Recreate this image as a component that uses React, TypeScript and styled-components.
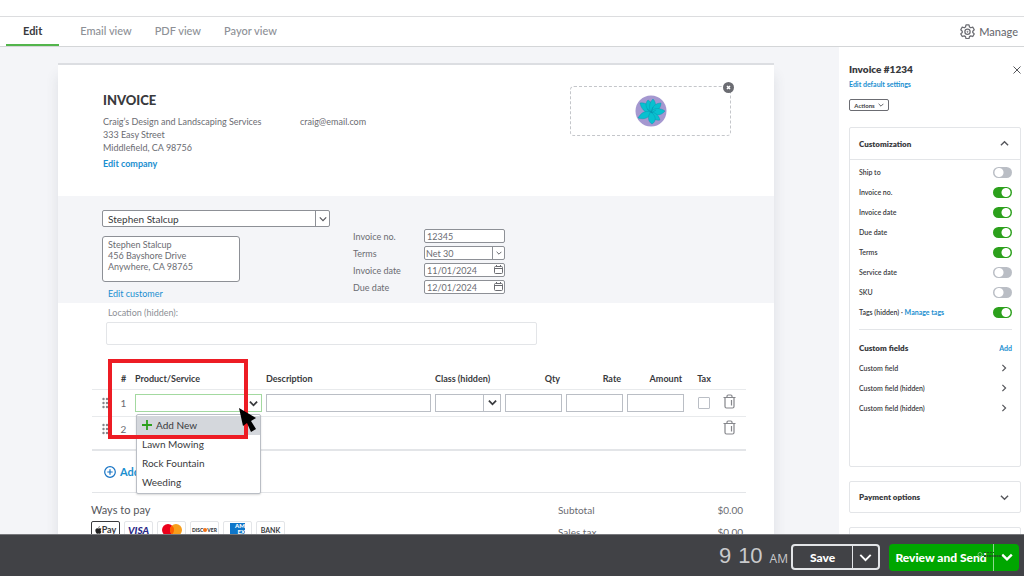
import React from "react";
import styled, { createGlobalStyle, css } from "styled-components";

const Global = createGlobalStyle`
  * { box-sizing: border-box; }
  body { margin: 0; font-family: Lato, "Open Sans", sans-serif; color: #393a3d; background: #fff; }
  button, input, select, textarea { font: inherit; color: inherit; margin: 0; }
  button { background: none; border: 0; padding: 0; cursor: pointer; }
  a { color: #1b8fd0; text-decoration: none; }
  svg { display: block; flex: none; }
`;

const Page = styled.div`
  height: 100vh;
  display: flex;
  flex-direction: column;
  overflow: hidden;
`;
const TopStrip = styled.div`
  height: 17px;
  flex: none;
  border-bottom: 1px solid #dcdddf;
`;
const TabBar = styled.nav`
  height: 30px;
  flex: none;
  display: flex;
  align-items: stretch;
  padding: 0 6px;
  border-bottom: 1px solid #d4d6d8;
  font-size: 11px;
`;
const Tab = styled.button<{ $active?: boolean }>`
  padding: 0 ${(p) => (p.$active ? 17 : 0)}px;
  margin-right: ${(p) => (p.$active ? 21 : 23)}px;
  color: ${(p) => (p.$active ? "#393a3d" : "#8d9096")};
  font-weight: ${(p) => (p.$active ? 700 : 500)};
  border-bottom: 2px solid ${(p) => (p.$active ? "#53b54c" : "transparent")};
`;
const Manage = styled.button`
  margin-left: auto;
  display: flex;
  align-items: center;
  gap: 4px;
  font-weight: 500;
  color: #6b6c72;
`;
const Body = styled.div`
  flex: 1;
  min-height: 0;
  display: flex;
  overflow: hidden;
  background: #f4f5f8;
`;
const Canvas = styled.main`
  flex: 1;
  min-width: 0;
  padding: 16px 65px 0 58px;
`;
const Paper = styled.article`
  background: #fff;
  border-top: 2px solid #dcdee2;
  box-shadow: 0 12px 12px rgba(60, 66, 80, 0.12);
`;
const PaperHead = styled.header`
  height: 131px;
  padding: 21px 43px 0 45px;
  display: flex;
  font-size: 9px;
  line-height: 13px;
  color: #6b6c72;
`;
const Company = styled.div`
  width: 197px;
`;
const Title = styled.h1`
  margin: 0;
  font-size: 13px;
  line-height: 29px;
  font-weight: 900;
  color: #393a3d;
`;
const Address = styled.p`
  margin: 0;
  white-space: pre-line;
`;
const TextLink = styled.a`
  display: inline-block;
  margin-top: 3px;
  font-weight: 700;
`;
const Email = styled.div`
  flex: 1;
  padding-top: 29px;
`;
const LogoBox = styled.div`
  position: relative;
  width: 161px;
  height: 50px;
  display: flex;
  align-items: center;
  justify-content: center;
  border: 1px dashed #c4c6ca;
  border-radius: 4px;
`;
const RemoveLogo = styled.button`
  position: absolute;
  right: -4px;
  top: -5px;
  width: 11px;
  height: 11px;
`;
const Customer = styled.section`
  min-height: 107px;
  padding: 14px 44px 0 44px;
  display: flex;
  background: #f4f5f8;
`;
const CustomerLeft = styled.div`
  width: 251px;
`;
const SelectWrap = styled.div<{ $arrow: number; $tone?: string }>`
  position: relative;
  display: flex;
  select {
    appearance: none;
    width: 100%;
    border: 1px solid ${(p) => p.$tone || "#8d9096"};
    border-radius: 2px;
    background: #fff;
    outline: 0;
  }
  > span {
    position: absolute;
    right: 0;
    top: 0;
    bottom: 0;
    width: ${(p) => p.$arrow}px;
    display: flex;
    align-items: center;
    justify-content: center;
    border-left: 1px solid ${(p) => p.$tone || "#8d9096"};
    pointer-events: none;
  }
`;
const CustomerSelect = styled(SelectWrap)`
  width: 228px;
  select { height: 17px; padding: 0 5px; font-size: 10px; }
`;
const AddressBox = styled.textarea`
  display: block;
  width: 138px;
  height: 46px;
  margin: 9px 0 6px;
  padding: 2px 5px;
  border: 1px solid #8d9096;
  border-radius: 3px;
  resize: none;
  overflow: hidden;
  background: #fff;
  color: #6b6c72 !important;
  font-size: 9px !important;
  line-height: 11px !important;
`;
const EditCustomer = styled.a`
  display: block;
  padding-left: 6px;
  font-size: 9px;
  line-height: 12px;
`;
const Details = styled.div`
  display: grid;
  grid-template-columns: 71px 81px;
  grid-auto-rows: 14px;
  row-gap: 3px;
  align-content: start;
  align-items: center;
  padding-top: 19px;
  font-size: 9px;
  color: #6b6c72;
  select { height: 14px; padding: 0 1px; }
`;
const DetailField = styled.div`
  position: relative;
  display: flex;
  input {
    width: 100%;
    height: 14px;
    padding: 0 2px;
    border: 1px solid #8d9096;
    border-radius: 2px;
    background: #fff;
  }
  svg { position: absolute; right: 2px; top: 2px; }
`;
const Location = styled.section`
  padding: 4px 44px 0 48px;
  font-size: 9px;
  color: #8d9096;
  label { display: block; padding-left: 2px; line-height: 12px; }
  input {
    display: block;
    width: 431px;
    height: 23px;
    margin-top: 3px;
    border: 1px solid #e3e5e8;
    border-radius: 2px;
  }
`;
const Lines = styled.section`
  position: relative;
  margin: 25px 28px 0 34px;
`;
const LineTable = styled.table`
  width: 100%;
  table-layout: fixed;
  border-collapse: collapse;
  font-size: 10px;
  th, td { padding: 0 2px; text-align: left; border-bottom: 1px solid #e8eaec; }
  th { height: 19px; line-height: 18px; font-size: 9px; font-weight: 700; white-space: nowrap; vertical-align: middle; }
  td { height: 27px; vertical-align: middle; }
  td:last-child { padding: 0 0 0 1px; }
  tr:last-child td { height: 34px; padding-bottom: 8px; border-bottom: 2px solid #e3e5e8; }
  th.num { text-align: right; padding-right: 4px; }
  th.mid, td.mid { text-align: center; }
  td.mid { color: #6b6c72; }
`;
const GripCell = styled.span`
  display: flex;
  justify-content: flex-end;
`;
const CellInput = styled.input<{ $green?: boolean }>`
  display: block;
  width: 100%;
  height: 18px;
  padding: 0 3px;
  border: 1px solid ${(p) => (p.$green ? "#a3d9a0" : "#babec5")};
  outline: 0;
`;
const CellSelect = styled(SelectWrap)`
  select { height: 18px; border-radius: 0; }
`;
const Combo = styled.div`
  position: relative;
  > svg { position: absolute; right: 4px; top: 5px; }
`;
const Menu = styled.ul`
  position: absolute;
  z-index: 2;
  left: 1px;
  top: 20px;
  width: 125px;
  margin: 0;
  padding: 1px 0;
  list-style: none;
  background: #fff;
  border: 1px solid #babec5;
  border-radius: 2px;
  box-shadow: 0 1px 2px rgba(0, 0, 0, 0.15);
`;
const MenuItem = styled.li<{ $on?: boolean }>`
  button {
    width: 100%;
    height: 19px;
    padding: 0 5px;
    display: flex;
    align-items: center;
    gap: 4px;
    font-size: 10px;
    ${(p) => p.$on && css`background: #d4d7dc;`}
  }
`;
const Check = styled.input`
  appearance: none;
  display: block;
  width: 12px;
  height: 12px;
  margin: 0 auto !important;
  border: 1px solid #babec5;
  border-radius: 1px;
  background: #fff;
`;
const Highlight = styled.div`
  position: absolute;
  z-index: 3;
  left: 16px;
  top: -11px;
  width: 140px;
  height: 80px;
  border: 4px solid #ed1c24;
  pointer-events: none;
`;
const Pointer = styled.div`
  position: absolute;
  z-index: 4;
  left: 147px;
  top: 36px;
  pointer-events: none;
`;
const AddRow = styled.div`
  height: 42px;
  padding-left: 12px;
  display: flex;
  align-items: center;
  border-bottom: 1px solid #e3e5e8;
  button { display: flex; align-items: center; gap: 4px; font-size: 11px; font-weight: 700; color: #1b8fd0; }
`;
const PayRow = styled.section`
  display: flex;
  justify-content: space-between;
  padding: 8px 31px 20px 33px;
`;
const PayTitle = styled.h2`
  margin: 0 0 3px;
  font-size: 11px;
  line-height: 17px;
  font-weight: 400;
  color: #55565b;
`;
const Chips = styled.div`
  display: flex;
  gap: 4px;
`;
const Chip = styled.span<{ $dark?: boolean; $color?: string }>`
  width: 29px;
  height: 17px;
  display: flex;
  align-items: center;
  justify-content: center;
  border: 1px solid ${(p) => (p.$dark ? "#393a3d" : "#e3e5e8")};
  border-radius: 2px;
  font-size: 7px;
  font-weight: 700;
  color: ${(p) => p.$color || "#393a3d"};
`;
const PayWord = styled.span`
  font-size: 9px;
`;
const Visa = styled.i`
  font-size: 10px;
  font-weight: 900;
`;
const Discover = styled.b`
  display: flex;
  align-items: center;
  font-size: 5px;
`;
const Amex = styled.span`
  width: 15px;
  height: 13px;
  font-size: 6px;
  line-height: 6px;
  font-weight: 900;
  text-align: right;
  color: #fff;
  background: #0f76c9;
`;
const Totals = styled.dl`
  width: 185px;
  margin: 1px 0 0;
  display: grid;
  grid-template-columns: 1fr auto;
  row-gap: 5px;
  font-size: 10px;
  line-height: 17px;
  color: #6b6c72;
  dd { margin: 0; }
`;
const Sidebar = styled.aside`
  width: 185px;
  flex: none;
  padding: 15px 3px 0 10px;
  background: #fff;
  font-size: 7px;
  font-weight: 600;
`;
const SideHead = styled.div`
  display: flex;
  justify-content: space-between;
  align-items: center;
  h2 { margin: 0; font-size: 10px; line-height: 15px; font-weight: 800; }
`;
const SideLink = styled.a`
  display: block;
  line-height: 15px;
  font-weight: 700;
`;
const Actions = styled.button`
  height: 12px;
  width: 40px;
  margin: 7px 0 16px;
  display: flex;
  align-items: center;
  justify-content: center;
  gap: 3px;
  border: 1px solid #6b6c72;
  border-radius: 2px;
  font-size: 6px;
  font-weight: 700;
`;
const Card = styled.section<{ $tall?: boolean }>`
  min-height: ${(p) => (p.$tall ? 340 : 32)}px;
  margin-bottom: 14px;
  border: 1px solid #e3e5e8;
  border-radius: 2px;
`;
const CardHead = styled.button<{ $open?: boolean }>`
  width: 100%;
  height: ${(p) => (p.$open ? 32 : 30)}px;
  padding: 0 11px 0 9px;
  display: flex;
  justify-content: space-between;
  align-items: center;
  font-size: 8px;
  font-weight: 800;
  border-bottom: ${(p) => (p.$open ? "1px solid #e3e5e8" : "0")};
`;
const Options = styled.div`
  margin: 0 8px 0 9px;
  padding: 2px 0 7px;
  border-bottom: 1px solid #e3e5e8;
`;
const OptionRow = styled.div`
  height: 20px;
  display: flex;
  justify-content: space-between;
  align-items: center;
  a { font-weight: 700; }
`;
const Toggle = styled.input`
  appearance: none;
  width: 19px;
  height: 11px;
  border-radius: 6px;
  background: radial-gradient(circle at 6px 50%, #fff 4px, transparent 5px) #babec5;
  &:checked { background: radial-gradient(circle at 13px 50%, #fff 4px, transparent 5px) #2ca01c; }
`;
const FieldsHead = styled(OptionRow)`
  margin: 8px 8px 0 9px;
  h3 { margin: 0; font-size: 8px; font-weight: 800; }
`;
const FieldRow = styled.button`
  width: 100%;
  height: 20px;
  padding: 0 12px 0 9px;
  display: flex;
  justify-content: space-between;
  align-items: center;
`;
const Footer = styled.footer`
  height: 42px;
  flex: none;
  display: flex;
  align-items: center;
  justify-content: flex-end;
  padding: 3px 5px 0 0;
  background: #414246;
  border-top: 1px solid #77787c;
  color: #fff;
  font-weight: 700;
`;
const Clock = styled.time`
  display: flex;
  align-items: baseline;
  margin-right: 3px;
  font-weight: 400;
  color: #c9cacc;
  font-family: "Liberation Sans", sans-serif;
  font-size: 22px;
  line-height: 22px;
  b { font-weight: 400; margin-right: 7px; }
  small { font-family: "Open Sans", sans-serif; font-size: 12px; }
`;
const SplitButton = styled.div<{ $green?: boolean }>`
  position: relative;
  height: ${(p) => (p.$green ? 27 : 26)}px;
  margin-left: ${(p) => (p.$green ? 9 : 0)}px;
  display: flex;
  border-radius: 4px;
  border: ${(p) => (p.$green ? "0" : "2px solid #e3e5e8")};
  background: ${(p) => (p.$green ? "#00a600" : "transparent")};
  button {
    display: flex;
    align-items: center;
    justify-content: center;
    font-size: 12px;
    font-weight: 900;
    white-space: nowrap;
  }
  button:first-child { width: ${(p) => (p.$green ? 104 : 59)}px; }
  button:last-of-type {
    width: 26px;
    border-left: 1px solid ${(p) => (p.$green ? "#8ed88e" : "#e3e5e8")};
  }
`;
const Mark = styled.span`
  position: absolute;
  right: 16px;
  top: 7px;
  pointer-events: none;
`;

const Chevron = ({ dir = "down", size = 8, w = 1.5, color = "#55565b" }: { dir?: string; size?: number; w?: number; color?: string }) => {
  const d = dir === "down" ? "M1 3 L5 7 L9 3" : dir === "up" ? "M1 7 L5 3 L9 7" : "M3 1 L7 5 L3 9";
  return (
    <svg width={size} height={size} viewBox="0 0 10 10" fill="none" stroke={color} strokeWidth={w}>
      <path d={d} />
    </svg>
  );
};

const Gear = () => (
  <svg width="15" height="15" viewBox="0 0 24 24" fill="none" stroke="#6b6c72" strokeWidth="2" strokeLinejoin="round">
    <path d="M9.6 1.5h4.8l.8 3.3 2 1.2 3.2-1 2.400 4.200-2.400 2.300v2l2.400 2.300-2.400 4.200-3.200-1-2 1.200-.8 3.300H9.600l-.8-3.300-2-1.200-3.200 1-2.400-4.200 2.400-2.300v-2L1.200 9.200 3.600 5l3.200 1 2-1.200z" />
    <circle cx="12" cy="12.500" r="4.200" />
    <circle cx="12" cy="12.500" r="0.800" strokeWidth="1.500" />
  </svg>
);

const Flower = () => (
  <svg width="32" height="32" viewBox="0 0 32 32">
    <circle cx="16" cy="16" r="15.500" fill="#a598d0" />
    <g fill="#08c0cf" stroke="#0790ac" strokeWidth="0.400">
      <path d="M16 18 C9 18 6 13 5 8 C11 7 16 11 16 18Z" />
      <path d="M16 18 C10 13 10 8 13 5 C17 7 18 12 16 18Z" />
      <path d="M16 18 C13 11 15 7 18 4 C22 8 21 13 16 18Z" />
      <path d="M16 18 C17 11 21 8 26 8 C26 13 22 18 16 18Z" />
      <path d="M16 17 C19 12 26 13 30 16 C26 21 20 21 16 17Z" />
      <path d="M16 17 C10 15 6 18 3 23 C9 25 15 23 16 17Z" />
      <path d="M15 17 C21 17 24 21 25 25 C20 26 16 23 15 17Z" />
      <path d="M16 17 C12 21 13 27 17 29 C22 26 21 21 16 17Z" />
    </g>
    <path d="M12 14l6 4M18 12l-2 6M21 15l-5 3" stroke="#0790ac" strokeWidth="0.500" />
  </svg>
);

const Calendar = () => (
  <svg width="9" height="9" viewBox="0 0 9 9" fill="none" stroke="#6b6c72" strokeWidth="1">
    <rect x="0.500" y="1.500" width="8" height="7" rx="1" />
    <path d="M0.500 3.500h8M2.500 0v2M6.500 0v2" />
  </svg>
);

const Grip = () => (
  <svg width="10" height="12" viewBox="0 0 10 12" fill="#85868b">
    {[1, 5, 9].map((y) => [1.5, 5, 8.5].map((x) => <circle key={`${x}-${y}`} cx={x} cy={y + 1} r="1.200" />))}
  </svg>
);

const Trash = () => (
  <svg width="13" height="15" viewBox="0 0 13 15" fill="none" stroke="#85868b" strokeWidth="1.200">
    <path d="M0.500 3.500h12M4 3.500V2.200q0-1.200 1.200-1.200h2.600q1.200 0 1.200 1.200v1.300M2 3.500v9q0 1.500 1.500 1.500h6q1.500 0 1.500-1.500v-9M8.500 6v5.500" />
  </svg>
);

const options = [
  ["Ship to", false],
  ["Invoice no.", true],
  ["Invoice date", true],
  ["Due date", true],
  ["Terms", true],
  ["Service date", false],
  ["SKU", false],
  ["Tags (hidden)", true],
] as const;

export default function App() {
  return (
    <Page>
      <Global />
      <TopStrip />
      <TabBar>
        <Tab $active>Edit</Tab>
        <Tab>Email view</Tab>
        <Tab>PDF view</Tab>
        <Tab>Payor view</Tab>
        <Manage><Gear />Manage</Manage>
      </TabBar>
      <Body>
        <Canvas>
          <Paper>
            <PaperHead>
              <Company>
                <Title>INVOICE</Title>
                <Address>{"Craig’s Design and Landscaping Services\n333 Easy Street\nMiddlefield, CA 98756"}</Address>
                <TextLink href="#company">Edit company</TextLink>
              </Company>
              <Email>craig@email.com</Email>
              <LogoBox>
                <Flower />
                <RemoveLogo aria-label="Remove logo">
                  <svg width="11" height="11" viewBox="0 0 11 11">
                    <circle cx="5.500" cy="5.500" r="5.500" fill="#6b6c72" />
                    <path d="M4 4l3 3M7 4l-3 3" stroke="#fff" strokeWidth="1.500" />
                  </svg>
                </RemoveLogo>
              </LogoBox>
            </PaperHead>
            <Customer>
              <CustomerLeft>
                <CustomerSelect $arrow={15}>
                  <select aria-label="Customer"><option>Stephen Stalcup</option></select>
                  <span><Chevron /></span>
                </CustomerSelect>
                <AddressBox aria-label="Billing address" defaultValue={"Stephen Stalcup\n456 Bayshore Drive\nAnywhere, CA 98765"} />
                <EditCustomer href="#customer">Edit customer</EditCustomer>
              </CustomerLeft>
              <Details>
                <label htmlFor="no">Invoice no.</label>
                <DetailField><input id="no" defaultValue="12345" /></DetailField>
                <label htmlFor="terms">Terms</label>
                <SelectWrap $arrow={13}>
                  <select id="terms"><option>Net 30</option></select>
                  <span><Chevron size={6} /></span>
                </SelectWrap>
                <label htmlFor="date">Invoice date</label>
                <DetailField><input id="date" defaultValue="11/01/2024" /><Calendar /></DetailField>
                <label htmlFor="due">Due date</label>
                <DetailField><input id="due" defaultValue="12/01/2024" /><Calendar /></DetailField>
              </Details>
            </Customer>
            <Location>
              <label htmlFor="location">Location (hidden):</label>
              <input id="location" />
            </Location>
            <Lines>
              <LineTable>
                <colgroup>
                  <col style={{ width: 22 }} />
                  <col style={{ width: 19 }} />
                  <col style={{ width: 131 }} />
                  <col />
                  <col style={{ width: 70 }} />
                  <col style={{ width: 61 }} />
                  <col style={{ width: 61 }} />
                  <col style={{ width: 61 }} />
                  <col style={{ width: 36 }} />
                  <col style={{ width: 24 }} />
                </colgroup>
                <thead>
                  <tr>
                    <th />
                    <th className="mid">#</th>
                    <th>Product/Service</th>
                    <th>Description</th>
                    <th>Class (hidden)</th>
                    <th className="num">Qty</th>
                    <th className="num">Rate</th>
                    <th className="num">Amount</th>
                    <th className="mid">Tax</th>
                    <th />
                  </tr>
                </thead>
                <tbody>
                  <tr>
                    <td><GripCell><Grip /></GripCell></td>
                    <td className="mid">1</td>
                    <td>
                      <Combo>
                        <CellInput $green aria-label="Product or service" />
                        <Chevron size={9} w={2} color="#393a3d" />
                        <Menu>
                          <MenuItem $on>
                            <button>
                              <svg width="10" height="10" viewBox="0 0 10 10" stroke="#2ca01c" strokeWidth="1.800"><path d="M5 0v10M0 5h10" /></svg>
                              Add New
                            </button>
                          </MenuItem>
                          <MenuItem><button>Lawn Mowing</button></MenuItem>
                          <MenuItem><button>Rock Fountain</button></MenuItem>
                          <MenuItem><button>Weeding</button></MenuItem>
                        </Menu>
                      </Combo>
                    </td>
                    <td><CellInput aria-label="Description" /></td>
                    <td>
                      <CellSelect $arrow={18} $tone="#babec5">
                        <select aria-label="Class"><option></option></select>
                        <span><Chevron size={9} w={2} color="#393a3d" /></span>
                      </CellSelect>
                    </td>
                    <td><CellInput aria-label="Quantity" /></td>
                    <td><CellInput aria-label="Rate" /></td>
                    <td><CellInput aria-label="Amount" /></td>
                    <td><Check type="checkbox" aria-label="Taxable" /></td>
                    <td><button aria-label="Delete line 1"><Trash /></button></td>
                  </tr>
                  <tr>
                    <td><GripCell><Grip /></GripCell></td>
                    <td className="mid">2</td>
                    <td /><td /><td /><td /><td /><td /><td />
                    <td><button aria-label="Delete line 2"><Trash /></button></td>
                  </tr>
                </tbody>
              </LineTable>
              <AddRow>
                <button>
                  <svg width="12" height="12" viewBox="0 0 12 12" fill="none" stroke="#1673c4" strokeWidth="1.200">
                    <circle cx="6" cy="6" r="5.300" />
                    <path d="M6 3.300v5.400M3.300 6h5.400" />
                  </svg>
                  Add lines
                </button>
              </AddRow>
              <Highlight />
              <Pointer>
                <svg width="20" height="27" viewBox="0 0 20 27">
                  <path d="M0 2 L17 12 L12 15 L17 23 L12 26 L8 17 L4 20 Z" fill="#000" />
                </svg>
              </Pointer>
            </Lines>
            <PayRow>
              <div>
                <PayTitle>Ways to pay</PayTitle>
                <Chips>
                  <Chip $dark>
                    <svg width="7" height="8" viewBox="0 0 7 8"><path d="M4.800 0Q3.300.5 3.400 1.900 4.800 1.700 4.800 0ZM6.500 2.800Q5.500 1.700 3.500 2.400 1.500 1.600.6 3.200-.2 5.300 1.600 7.600 2.300 8 3.500 7.500 4.900 8.200 5.600 7.200L6.400 5.800Q4.900 4.400 6.500 2.800Z" fill="#222" /></svg>
                    <PayWord>Pay</PayWord>
                  </Chip>
                  <Chip $color="#2a2a86"><Visa>VISA</Visa></Chip>
                  <Chip>
                    <svg width="20" height="12" viewBox="0 0 20 12">
                      <circle cx="6" cy="6" r="6" fill="#eb001b" />
                      <circle cx="14" cy="6" r="6" fill="#f79e1b" />
                      <path d="M10 1.500a6 6 0 0 1 0 9a6 6 0 0 1 0-9z" fill="#ff5f00" />
                    </svg>
                  </Chip>
                  <Chip>
                    <Discover>DISC<svg width="4" height="4" viewBox="0 0 4 4"><circle cx="2" cy="2" r="2" fill="#f47216" /></svg>VER</Discover>
                  </Chip>
                  <Chip><Amex>AM<br />EX</Amex></Chip>
                  <Chip>BANK</Chip>
                </Chips>
              </div>
              <Totals>
                <dt>Subtotal</dt><dd>$0.00</dd>
                <dt>Sales tax</dt><dd>$0.00</dd>
              </Totals>
            </PayRow>
          </Paper>
        </Canvas>
        <Sidebar>
          <SideHead>
            <h2>Invoice #1234</h2>
            <button aria-label="Close">
              <svg width="8" height="8" viewBox="0 0 8 8" stroke="#55565b" strokeWidth="1"><path d="M0.500 0.500l7 7M7.500 0.500l-7 7" /></svg>
            </button>
          </SideHead>
          <SideLink href="#defaults">Edit default settings</SideLink>
          <Actions>Actions<Chevron size={6} /></Actions>
          <Card $tall>
            <CardHead $open>Customization<Chevron dir="up" size={9} /></CardHead>
            <Options>
              {options.map(([name, on]) => (
                <OptionRow key={name}>
                  <span>
                    <label htmlFor={name}>{name}</label>
                    {name.startsWith("Tags") && <> · <a href="#tags">Manage tags</a></>}
                  </span>
                  <Toggle type="checkbox" id={name} defaultChecked={on} />
                </OptionRow>
              ))}
            </Options>
            <FieldsHead><h3>Custom fields</h3><a href="#add">Add</a></FieldsHead>
            <FieldRow>Custom field<Chevron dir="right" /></FieldRow>
            <FieldRow>Custom field (hidden)<Chevron dir="right" /></FieldRow>
            <FieldRow>Custom field (hidden)<Chevron dir="right" /></FieldRow>
          </Card>
          <Card><CardHead>Payment options<Chevron size={9} /></CardHead></Card>
          <Card />
        </Sidebar>
      </Body>
      <Footer>
        <Clock><b>9</b><b>10</b><small>AM</small></Clock>
        <SplitButton>
          <button>Save</button>
          <button aria-label="More save options"><Chevron size={13} color="#fff" /></button>
        </SplitButton>
        <SplitButton $green>
          <button>Review and Send</button>
          <button aria-label="More send options"><Chevron size={12} w={2} color="#fff" /></button>
          <Mark>
            <svg width="26" height="8" viewBox="0 0 26 8" fill="none" stroke="#1c5a1c" strokeWidth="1">
              <circle cx="3" cy="3.500" r="2" stroke="#7fc07f" />
              <path d="M7 1.500h10" strokeDasharray="2 1" />
              <path d="M7 5h18" strokeWidth="2" strokeDasharray="2 0.500" />
            </svg>
          </Mark>
        </SplitButton>
      </Footer>
    </Page>
  );
}
